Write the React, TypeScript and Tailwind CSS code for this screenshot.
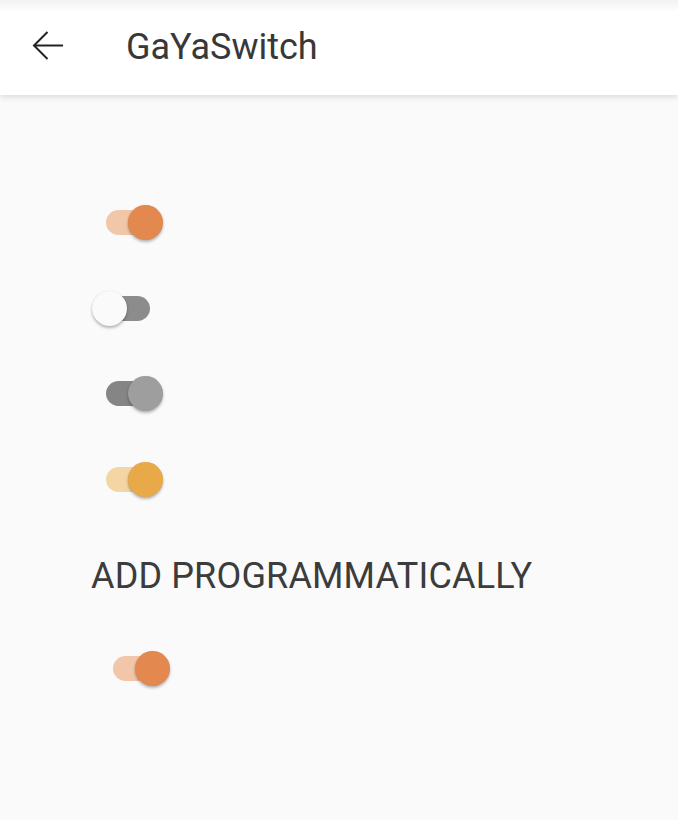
import React from "react";

type SwitchProps = {
  on: boolean;
  thumb: string;
  track: string;
  extra?: string;
};

function Switch({ on, thumb, track, extra = "" }: SwitchProps) {
  return (
    <div className={`relative h-[35px] w-[71px] shrink-0 ${extra}`}>
      <div
        className={`absolute left-[13.5px] top-[5px] h-[25px] w-[44px] rounded-full ${track}`}
      />
      <div
        className={`absolute top-0 h-[35px] w-[35px] rounded-full shadow-[0_2px_3px_rgba(0,0,0,0.28),0_0_1px_rgba(0,0,0,0.12)] ${thumb} ${
          on ? "left-[36px]" : "left-0"
        }`}
      />
    </div>
  );
}

export default function App() {
  return (
    <div
      className="flex min-h-[820px] w-full flex-col bg-[#fafafa]"
      style={{ fontFamily: "Roboto, 'Noto Sans', 'Liberation Sans', sans-serif" }}
    >
      <header className="relative z-10 flex h-[95px] items-center bg-[linear-gradient(to_bottom,#f2f2f2,#ffffff_12px)] shadow-[0_2px_6px_rgba(0,0,0,0.13)]">
        <svg
          width="34"
          height="32"
          viewBox="0 0 34 32"
          className="ml-[31px] mt-[-4px] shrink-0"
          fill="none"
          stroke="#222"
          strokeWidth="2"
          strokeLinecap="butt"
        >
          <path d="M3 15.5H32" />
          <path d="M16.5 2L3 15.5L16.5 29" />
        </svg>
        <h1 className="ml-[61px] mt-[-1px] text-[36px] leading-[42px] font-normal text-[#383838]">
          GaYaSwitch
        </h1>
      </header>

      <main className="flex flex-col pl-[92px] pt-[110px]">
        <div className="flex flex-col gap-[50.5px]">
          <Switch on thumb="bg-[#e3884f]" track="bg-[#f1c6a9]" />
          <Switch on={false} thumb="bg-[#fafafa]" track="bg-[#8c8c8c]" />
          <Switch on thumb="bg-[#9e9e9e]" track="bg-[#858585]" />
          <Switch on thumb="bg-[#e8aa48]" track="bg-[#f3d6a3]" />
        </div>

        <p className="ml-[-1px] mt-[58px] text-[36px] leading-[42px] font-normal tracking-[0.15px] text-[#3c3c3c]">
          ADD PROGRAMMATICALLY
        </p>

        <div className="mt-[54px] flex">
          <Switch on thumb="bg-[#e3884f]" track="bg-[#f1c6a9]" extra="ml-[7px]" />
        </div>
      </main>
    </div>
  );
}
